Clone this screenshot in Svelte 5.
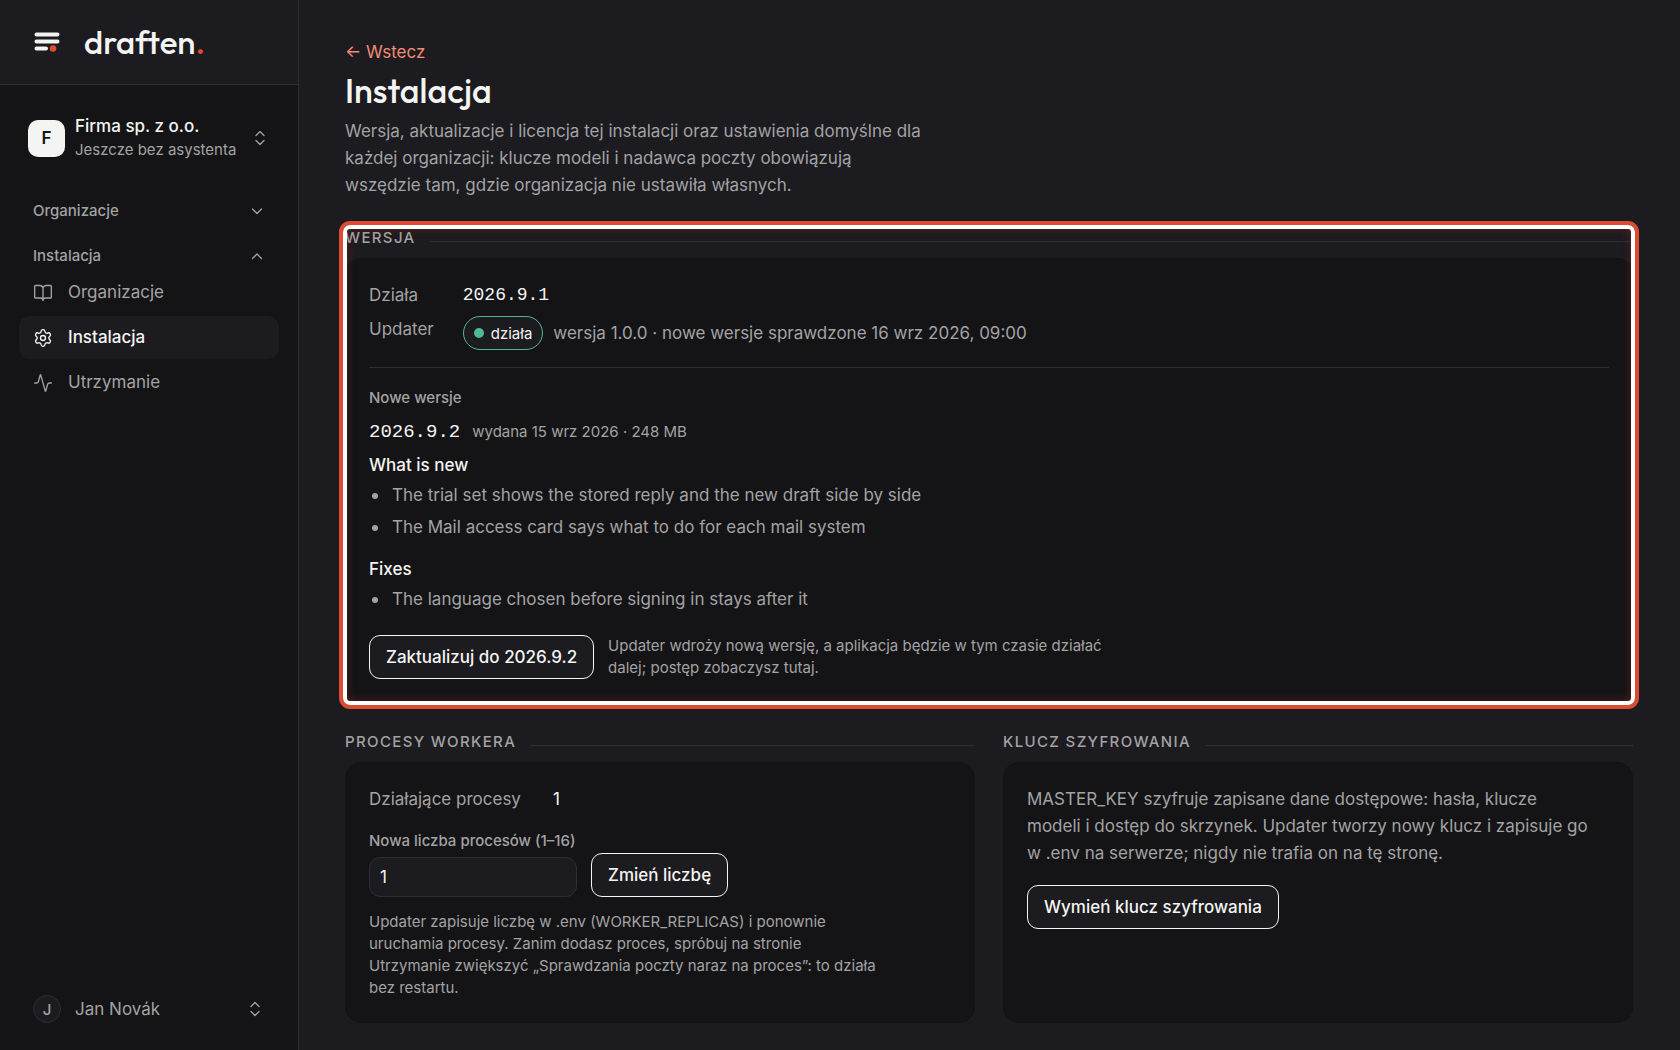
<script lang="ts">
  let workers = $state('1');

  const nav = [
    { label: 'Organizacje', icon: 'book', active: false },
    { label: 'Instalacja', icon: 'gear', active: true },
    { label: 'Utrzymanie', icon: 'pulse', active: false }
  ];

  const notes = [
    {
      title: 'What is new',
      items: [
        'The trial set shows the stored reply and the new draft side by side',
        'The Mail access card says what to do for each mail system'
      ]
    },
    { title: 'Fixes', items: ['The language chosen before signing in stays after it'] }
  ];
</script>

{#snippet sorter()}
  <svg class="sorter" viewBox="0 0 12 16" aria-hidden="true"><path d="M2 5.5 6 1.5l4 4M2 10.5l4 4 4-4" /></svg>
{/snippet}

<div class="shell">
  <aside class="sidebar">
    <div class="brand">
      <svg class="mark" viewBox="0 0 26 20" aria-hidden="true">
        <path d="M2.5 2.5h21M2.5 9.5h21M2.5 16.5h9.5" stroke="#f4f4f2" stroke-width="4" stroke-linecap="round" />
        <circle cx="19" cy="16.5" r="3.3" fill="#de4b33" />
      </svg>
      <span class="wordmark">draften<span class="dot">.</span></span>
    </div>

    <button class="org" type="button">
      <span class="org-badge">F</span>
      <span class="org-text">
        <span class="org-name">Firma sp. z o.o.</span>
        <span class="org-sub">Jeszcze bez asystenta</span>
      </span>
      {@render sorter()}
    </button>

    <nav class="nav">
      <button class="group" type="button" aria-expanded="false">
        Organizacje
        <svg class="chevron" viewBox="0 0 12 12" aria-hidden="true"><path d="m1.5 4 4.5 4.5L10.5 4" /></svg>
      </button>
      <button class="group" type="button" aria-expanded="true">
        Instalacja
        <svg class="chevron" viewBox="0 0 12 12" aria-hidden="true"><path d="M1.5 8.5 6 4l4.5 4.5" /></svg>
      </button>
      <ul class="links">
        {#each nav as item}
          <li>
            <a href="#{item.icon}" class:active={item.active}>
              <svg viewBox="0 0 24 24" aria-hidden="true">
                {#if item.icon === 'book'}
                  <path d="M12 7v14M3 18a1 1 0 0 1-1-1V4a1 1 0 0 1 1-1h5a4 4 0 0 1 4 4 4 4 0 0 1 4-4h5a1 1 0 0 1 1 1v13a1 1 0 0 1-1 1h-6a3 3 0 0 0-3 3 3 3 0 0 0-3-3z" />
                {:else if item.icon === 'gear'}
                  <path d="M9.671 4.136a2.34 2.34 0 0 1 4.659 0 2.34 2.34 0 0 0 3.319 1.915 2.34 2.34 0 0 1 2.33 4.033 2.34 2.34 0 0 0 0 3.831 2.34 2.34 0 0 1-2.33 4.033 2.34 2.34 0 0 0-3.319 1.915 2.34 2.34 0 0 1-4.659 0 2.34 2.34 0 0 0-3.32-1.915 2.34 2.34 0 0 1-2.33-4.033 2.34 2.34 0 0 0 0-3.831A2.34 2.34 0 0 1 6.35 6.051a2.34 2.34 0 0 0 3.319-1.915" />
                  <circle cx="12" cy="12" r="3" />
                {:else}
                  <path d="M22 12h-2.48a2 2 0 0 0-1.93 1.46l-2.35 8.36a.25.25 0 0 1-.48 0L9.24 2.18a.25.25 0 0 0-.48 0l-2.35 8.36A2 2 0 0 1 4.49 12H2" />
                {/if}
              </svg>
              {item.label}
            </a>
          </li>
        {/each}
      </ul>
    </nav>

    <button class="user" type="button">
      <span class="user-badge">J</span>
      <span class="user-name">Jan Novák</span>
      {@render sorter()}
    </button>
  </aside>

  <main class="page">
    <header class="intro">
      <a class="back" href="#back">← Wstecz</a>
      <h1>Instalacja</h1>
      <p>
        Wersja, aktualizacje i licencja tej instalacji oraz ustawienia domyślne dla każdej organizacji: klucze modeli i
        nadawca poczty obowiązują wszędzie tam, gdzie organizacja nie ustawiła własnych.
      </p>
    </header>

    <section class="highlight">
      <h2>Wersja</h2>
      <div class="card">
        <dl class="facts">
          <dt>Działa</dt>
          <dd class="mono">2026.9.1</dd>
          <dt>Updater</dt>
          <dd class="status">
            <span class="pill">działa</span>
            <span>wersja 1.0.0 · nowe wersje sprawdzone 16 wrz 2026, 09:00</span>
          </dd>
        </dl>

        <div class="release">
          <h3>Nowe wersje</h3>
          <p class="release-head">
            <span class="mono large">2026.9.2</span>
            <span class="hint">wydana 15 wrz 2026 · 248 MB</span>
          </p>
          {#each notes as note}
            <h4>{note.title}</h4>
            <ul class="notes">
              {#each note.items as item}
                <li>{item}</li>
              {/each}
            </ul>
          {/each}
          <div class="action">
            <button class="btn" type="button">Zaktualizuj do 2026.9.2</button>
            <p class="hint">Updater wdroży nową wersję, a aplikacja będzie w tym czasie działać dalej; postęp zobaczysz tutaj.</p>
          </div>
        </div>
      </div>
    </section>

    <div class="columns">
      <section>
        <h2>Procesy workera</h2>
        <div class="card">
          <dl class="count">
            <dt>Działające procesy</dt>
            <dd>1</dd>
          </dl>
          <form class="workers" onsubmit={(e) => e.preventDefault()}>
            <div class="field">
              <label for="workers">Nowa liczba procesów (1–16)</label>
              <input id="workers" type="text" inputmode="numeric" bind:value={workers} />
            </div>
            <button class="btn" type="submit">Zmień liczbę</button>
          </form>
          <p class="hint">
            Updater zapisuje liczbę w .env (WORKER_REPLICAS) i ponownie uruchamia procesy. Zanim dodasz proces, spróbuj na
            stronie Utrzymanie zwiększyć „Sprawdzania poczty naraz na proces”: to działa bez restartu.
          </p>
        </div>
      </section>

      <section>
        <h2>Klucz szyfrowania</h2>
        <div class="card">
          <p class="text">
            MASTER_KEY szyfruje zapisane dane dostępowe: hasła, klucze modeli i dostęp do skrzynek. Updater tworzy nowy
            klucz i zapisuje go w .env na serwerze; nigdy nie trafia on na tę stronę.
          </p>
          <button class="btn" type="button">Wymień klucz szyfrowania</button>
        </div>
      </section>
    </div>
  </main>
</div>

<style>
  :global(body) {
    background: #1c1b1f;
  }

  .shell {
    --bg: #1c1b1f;
    --panel: #141416;
    --line: #2e2d31;
    --text: #f4f4f2;
    --muted: #a3a2a4;
    --accent: #de4b33;
    display: grid;
    grid-template-columns: 299px minmax(0, 1fr);
    min-height: 100vh;
    background: var(--bg);
    color: var(--muted);
    font: 400 17px/27px Inter, 'Liberation Sans', sans-serif;
  }

  .shell *,
  .shell *::before,
  .shell *::after {
    box-sizing: border-box;
  }

  h1, h2, h3, h4, p, ul, dl, dd {
    margin: 0;
    padding: 0;
  }

  button, input {
    font: inherit;
    color: inherit;
  }

  a {
    color: inherit;
    text-decoration: none;
  }

  svg {
    fill: none;
    stroke-linecap: round;
    stroke-linejoin: round;
  }

  /* Sidebar */
  .sidebar {
    display: flex;
    flex-direction: column;
    background: var(--panel);
    border-right: 1px solid var(--line);
  }

  .brand {
    display: flex;
    align-items: center;
    gap: 24px;
    height: 85px;
    padding: 0 34px;
    background: var(--bg);
    border-bottom: 1px solid var(--line);
  }

  .mark {
    width: 26px;
    height: 20px;
  }

  .wordmark {
    color: var(--text);
    font: 500 33px/40px Outfit, Lato, sans-serif;
  }

  .dot {
    color: var(--accent);
  }

  .org,
  .user,
  .group {
    display: flex;
    align-items: center;
    border: 0;
    background: none;
    text-align: left;
    cursor: pointer;
  }

  .org {
    gap: 10px;
    margin-top: 29px;
    padding: 0 32px 0 28px;
  }

  .org-badge {
    display: grid;
    place-items: center;
    width: 37px;
    height: 37px;
    border-radius: 10px;
    background: var(--text);
    color: var(--panel);
    font-size: 17px;
    font-weight: 600;
  }

  .org-text {
    display: flex;
    flex: 1;
    flex-direction: column;
    line-height: 24px;
    white-space: nowrap;
  }

  .org-name {
    color: var(--text);
    font-weight: 500;
  }

  .org-sub {
    font-size: 15px;
  }

  .sorter {
    width: 12px;
    height: 16px;
    stroke: currentColor;
    stroke-width: 1.3;
  }

  .nav {
    flex: 1;
    margin-top: 26px;
    padding: 0 19px;
  }

  .group {
    justify-content: space-between;
    width: 100%;
    height: 45px;
    padding: 0 16px 0 14px;
    font-size: 15px;
    font-weight: 500;
  }

  .chevron {
    width: 12px;
    height: 12px;
    stroke: currentColor;
    stroke-width: 1.3;
  }

  .links {
    display: grid;
    gap: 2px;
    margin-top: -7px;
    list-style: none;
  }

  .links a {
    display: flex;
    align-items: center;
    gap: 15px;
    height: 43px;
    padding: 0 14px;
    border-radius: 11px;
  }

  .links svg {
    width: 20px;
    height: 20px;
    stroke: currentColor;
    stroke-width: 1.6;
  }

  .links .active {
    background: var(--bg);
    color: var(--text);
    font-weight: 500;
  }

  .user {
    gap: 14px;
    padding: 0 37px 28px 33px;
  }

  .user-badge {
    display: grid;
    place-items: center;
    width: 28px;
    height: 28px;
    border: 1px solid var(--line);
    border-radius: 50%;
    background: var(--bg);
    font-size: 15px;
    font-weight: 500;
  }

  .user-name {
    flex: 1;
  }

  /* Page */
  .page {
    padding: 39px 47px 28px 46px;
  }

  .intro {
    margin-bottom: 28px;
  }

  .back {
    display: block;
    color: #f58b74;
  }

  h1 {
    margin: 5px 0 7px;
    color: var(--text);
    font: 500 34px/40px Outfit, Lato, sans-serif;
  }

  .intro p {
    max-width: 580px;
  }

  section {
    display: flex;
    flex-direction: column;
  }

  h2 {
    display: flex;
    align-items: center;
    gap: 14px;
    margin-bottom: 10px;
    font-size: 15px;
    line-height: 21px;
    font-weight: 500;
    letter-spacing: 0.09em;
    text-transform: uppercase;
  }

  h2::after {
    content: '';
    flex: 1;
    height: 1px;
    margin-top: 8px;
    background: var(--line);
  }

  .card {
    flex: 1;
    padding: 24px;
    border-radius: 16px;
    background: var(--panel);
  }

  /* Ring around the section the reader is pointed to */
  .highlight {
    position: relative;
  }

  .highlight::after {
    content: '';
    position: absolute;
    inset: -2px;
    border: 4px solid #fff;
    border-radius: 7px;
    box-shadow:
      0 0 0 4px var(--accent),
      inset 0 0 10px rgba(222, 50, 35, 0.3);
    pointer-events: none;
  }

  .facts {
    display: grid;
    grid-template-columns: max-content 1fr;
    column-gap: 29px;
    row-gap: 7px;
    padding-bottom: 17px;
    border-bottom: 1px solid var(--line);
  }

  .mono {
    color: var(--text);
    font-family: 'Liberation Mono', monospace;
    font-size: 18px;
  }

  .large {
    font-size: 19px;
  }

  .status {
    display: flex;
    align-items: center;
    gap: 10px;
  }

  .pill {
    display: flex;
    align-items: center;
    gap: 7px;
    height: 34px;
    padding: 0 10px;
    border: 1px solid #4fb892;
    border-radius: 17px;
    background: var(--bg);
    color: var(--text);
    font-size: 15px;
  }

  .pill::before {
    content: '';
    width: 10px;
    height: 10px;
    border-radius: 50%;
    background: #4fb892;
  }

  .hint {
    max-width: 512px;
    font-size: 15px;
    line-height: 22px;
  }

  .release {
    padding-top: 16px;
  }

  h3 {
    font-size: 15px;
    font-weight: 500;
  }

  .release-head {
    display: flex;
    align-items: baseline;
    gap: 12px;
    margin: 8px 0 6px;
  }

  h4 {
    color: var(--text);
    font-size: 17px;
    font-weight: 500;
  }

  .notes {
    display: grid;
    gap: 5px;
    margin: 3px 0 15px;
    list-style: none;
  }

  .notes li {
    display: flex;
    align-items: center;
    gap: 14px;
    padding-left: 3px;
  }

  .notes li::before {
    content: '';
    width: 6px;
    height: 6px;
    border-radius: 50%;
    background: currentColor;
  }

  .action {
    display: flex;
    align-items: center;
    gap: 14px;
    margin-top: 22px;
  }

  .btn {
    align-self: flex-start;
    height: 44px;
    padding: 0 16px;
    border: 1px solid var(--text);
    border-radius: 11px;
    background: var(--bg);
    color: var(--text);
    font-weight: 500;
    white-space: nowrap;
    cursor: pointer;
  }

  .columns {
    display: grid;
    grid-template-columns: repeat(2, minmax(0, 1fr));
    gap: 28px;
    margin-top: 28px;
  }

  .count {
    display: flex;
    gap: 32px;
  }

  .count dd {
    color: var(--text);
  }

  .workers {
    display: flex;
    align-items: flex-end;
    gap: 14px;
    margin: 16px 0 14px;
  }

  .workers .btn {
    align-self: flex-end;
  }

  .field {
    display: flex;
    flex-direction: column;
    gap: 4px;
  }

  .field label {
    font-size: 15px;
    line-height: 24px;
    font-weight: 500;
  }

  .field input {
    width: 208px;
    height: 40px;
    padding: 0 10px;
    border: 1px solid var(--line);
    border-radius: 11px;
    background: var(--bg);
    color: var(--text);
  }

  .text {
    max-width: 564px;
    margin-bottom: 18px;
  }
</style>
